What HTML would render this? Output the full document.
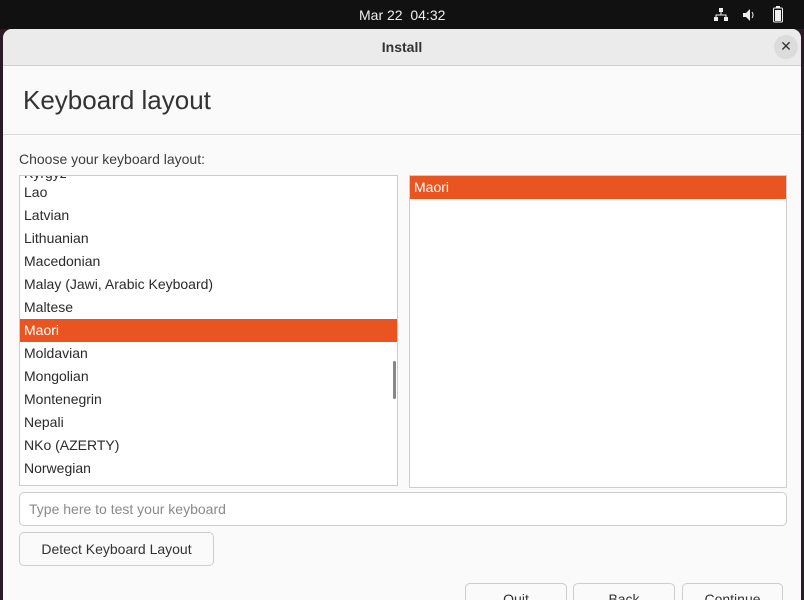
<!DOCTYPE html>
<html style="width:804px;height:600px;overflow:hidden"><head><style>
*{margin:0;padding:0;box-sizing:border-box}
body{width:804px;height:600px;overflow:hidden;background:#2c1a26;font-family:"Liberation Sans","DejaVu Sans",sans-serif;position:relative;color:#3d3d3d}
.top{position:absolute;left:0;top:0;width:804px;height:29px;background:#111;color:#eee;font-size:14px}
.win{position:absolute;left:3px;top:29px;width:798px;height:571px;background:#fafafa;border-radius:9px 9px 0 0;overflow:hidden}
.tb{height:37px;background:#ebebeb;border-bottom:1px solid #d0d0d0;text-align:center;font-size:14px;font-weight:bold;line-height:37px;color:#333}
.abs{position:absolute}
.list{position:absolute;background:#fff;border:1px solid #cdcdcd;overflow:hidden;font-size:14px;color:#2a2a2a}
.row{height:23px;line-height:23px;padding-left:4px}
.sel{background:#e95420;color:#fff}
.btn{position:absolute;border:1px solid #cdcdcd;border-radius:5px;background:#fafafa;font-size:14px;text-align:center;color:#333}
</style></head><body>
<div class="top"><div class="abs" style="left:359px;top:7px">Mar 22&nbsp; 04:32</div>
<svg class="abs" style="left:713px;top:8px" width="16" height="14"><rect x="6" y="0" width="4" height="4" fill="#eee"/><rect x="1" y="9" width="4" height="4" fill="#eee"/><rect x="11" y="9" width="4" height="4" fill="#eee"/><path d="M8 4v3M3 9V7h10v2" stroke="#eee" fill="none"/></svg>
<svg class="abs" style="left:742px;top:8px" width="14" height="14"><path d="M1 5h3l4-4v12l-4-4H1z" fill="#eee"/><path d="M10 4q2 3 0 6" stroke="#eee" fill="none"/></svg>
<svg class="abs" style="left:773px;top:6px" width="10" height="17"><rect x="3" y="0" width="4" height="2" fill="#eee"/><rect x="0.5" y="2" width="9" height="14" rx="1" fill="none" stroke="#eee"/><rect x="2" y="4" width="6" height="11" fill="#eee"/></svg>
</div>
<div class="win">
<div class="tb">Install</div>
<div class="abs" style="left:771px;top:6px;width:24px;height:24px;border-radius:12px;background:#dcdcdc;text-align:center;line-height:23px;font-size:14px;color:#333">✕</div>
<div class="abs" style="left:20px;top:56px;font-size:26px;color:#333">Keyboard layout</div>
<div class="abs" style="left:0;top:105px;width:798px;height:1px;background:#dadada"></div>
<div class="abs" style="left:16px;top:122px;font-size:14px">Choose your keyboard layout:</div>
</div>
<div class="list" style="left:19px;top:175px;width:379px;height:311px">
<div style="margin-top:-6px">
<div class="row" style="height:11px;line-height:6px">Kyrgyz</div>
<div class="row">Lao</div><div class="row">Latvian</div><div class="row">Lithuanian</div><div class="row">Macedonian</div><div class="row">Malay (Jawi, Arabic Keyboard)</div><div class="row">Maltese</div><div class="row sel">Maori</div><div class="row">Moldavian</div><div class="row">Mongolian</div><div class="row">Montenegrin</div><div class="row">Nepali</div><div class="row">NKo (AZERTY)</div><div class="row">Norwegian</div>
</div>
<div class="abs" style="left:373px;top:185px;width:3px;height:38px;background:#888;border-radius:2px"></div>
</div>
<div class="list" style="left:409px;top:175px;width:378px;height:313px"><div class="row sel">Maori</div></div>
<div class="btn" style="left:19px;top:492px;width:768px;height:34px;background:#fff;text-align:left;padding-left:9px;line-height:32px;color:#8a8a8a">Type here to test your keyboard</div>
<div class="btn" style="left:19px;top:532px;width:195px;height:34px;line-height:32px">Detect Keyboard Layout</div>
<div class="btn" style="left:465px;top:583px;width:102px;height:34px;line-height:30px">Quit</div>
<div class="btn" style="left:573px;top:583px;width:102px;height:34px;line-height:30px">Back</div>
<div class="btn" style="left:682px;top:583px;width:101px;height:34px;line-height:30px">Continue</div>
</body></html>
